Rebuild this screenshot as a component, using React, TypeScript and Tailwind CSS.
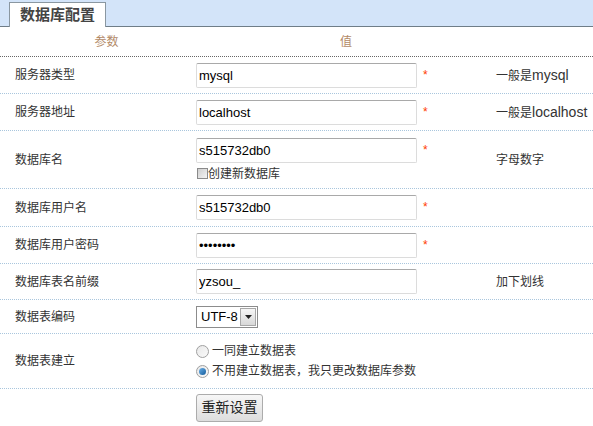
import React from 'react';

const font = "font-['Liberation_Sans','Noto_Sans_CJK_SC',sans-serif]";

function Field({ value, password = false }: { value: string; password?: boolean }) {
  return (
    <input
      type={password ? 'password' : 'text'}
      defaultValue={value}
      className="w-[221px] h-[25px] px-[2px] text-[13px] text-black border border-[#dcdcdc] border-t-[#a9a9a9] rounded-[2px] bg-white outline-none"
    />
  );
}

function Star() {
  return <span className="ml-[6px] mt-[6px] leading-none text-[12px] text-[#ff3c00]">*</span>;
}

function Row({
  label,
  h,
  children,
  hint,
  last = false,
}: {
  label: string;
  h: string;
  children?: React.ReactNode;
  hint?: React.ReactNode;
  last?: boolean;
}) {
  return (
    <div className={`flex items-center ${h} ${last ? '' : 'border-b border-dotted border-[#a9c6dd]'}`}>
      <div className="w-[196px] pl-[15px]">{label}</div>
      <div className="w-[300px] flex flex-col">{children}</div>
      <div className="flex-1">{hint}</div>
    </div>
  );
}

function Radio({ checked }: { checked?: boolean }) {
  return (
    <span className="w-[13px] h-[13px] rounded-full border border-[#a0a0a0] bg-gradient-to-br from-[#e8e8e8] to-[#fafafa] flex items-center justify-center">
      {checked && <span className="w-[7px] h-[7px] rounded-full bg-gradient-to-br from-[#6ab1e8] to-[#0f5c9c]" />}
    </span>
  );
}

export default function App() {
  return (
    <div className={`w-[593px] h-[426px] overflow-hidden bg-white text-[12px] text-[#333] ${font}`}>
      {/* tab band */}
      <div className="h-[27px] bg-[#d3e4f9] border-b border-[#6f7d88] flex items-end pl-[9px]">
        <div className="relative -mb-px h-[25px] w-[97px] bg-white border border-b-0 border-[#8a97a1] text-center text-[15px] font-bold leading-[24px] text-[#444]">
          数据库配置
        </div>
      </div>

      {/* header */}
      <div className="flex items-center h-[30px] border-b border-dotted border-[#666] text-[#b38a68]">
        <div className="w-[196px] pl-[17px] text-center">参数</div>
        <div className="w-[300px] text-center">值</div>
      </div>

      <Row label="服务器类型" h="h-[37px]" hint={<>一般是<span className="text-[14px]">mysql</span></>}>
        <div className="flex items-start">
          <Field value="mysql" />
          <Star />
        </div>
      </Row>

      <Row label="服务器地址" h="h-[37px]" hint={<>一般是<span className="text-[14px]">localhost</span></>}>
        <div className="flex items-start">
          <Field value="localhost" />
          <Star />
        </div>
      </Row>

      <Row label="数据库名" h="h-[58px]" hint="字母数字">
        <div className="flex items-start">
          <Field value="s515732db0" />
          <Star />
        </div>
        <label className="flex items-center mt-[3px] h-[15px]">
          <span className="ml-px w-[11px] h-[11px] border border-[#8a8a8a] bg-gradient-to-br from-[#cfcfcf] to-[#f4f4f4]" />
          <span>创建新数据库</span>
        </label>
      </Row>

      <Row label="数据库用户名" h="h-[38px]">
        <div className="flex items-start">
          <Field value="s515732db0" />
          <Star />
        </div>
      </Row>

      <Row label="数据库用户密码" h="h-[37px]">
        <div className="flex items-start">
          <Field value="12345678" password />
          <Star />
        </div>
      </Row>

      <Row label="数据库表名前缀" h="h-[36px]" hint="加下划线">
        <div className="flex items-start">
          <Field value="yzsou_" />
        </div>
      </Row>

      <Row label="数据表编码" h="h-[34px]">
        <div className="flex">
          <div className="w-[62px] h-[22px] border border-[#8c8c8c] bg-white flex items-center justify-between pl-[4px] pr-px">
            <span className="text-[13px] text-black">UTF-8</span>
            <span className="w-[16px] h-[18px] border border-[#a8a8a8] bg-gradient-to-b from-[#f6f6f6] to-[#d8d8d8] flex items-center justify-center">
              <svg width="7" height="4" viewBox="0 0 7 4">
                <path d="M0 0h7L3.5 4z" fill="#222" />
              </svg>
            </span>
          </div>
        </div>
      </Row>

      <Row label="数据表建立" h="h-[55px]">
        <div className="flex flex-col gap-[7px]">
          <div className="flex items-center gap-[3px] h-[13px]">
            <Radio />
            <span>一同建立数据表</span>
          </div>
          <div className="flex items-center gap-[3px] h-[13px]">
            <Radio checked />
            <span>不用建立数据表，我只更改数据库参数</span>
          </div>
        </div>
      </Row>

      <Row label="" h="h-[37px]" last>
        <div className="flex">
          <button className="w-[67px] h-[28px] border border-[#acacac] rounded-[3px] bg-gradient-to-b from-[#f7f7f7] to-[#dddddd] text-[14px] text-[#222]">
            重新设置
          </button>
        </div>
      </Row>
    </div>
  );
}
